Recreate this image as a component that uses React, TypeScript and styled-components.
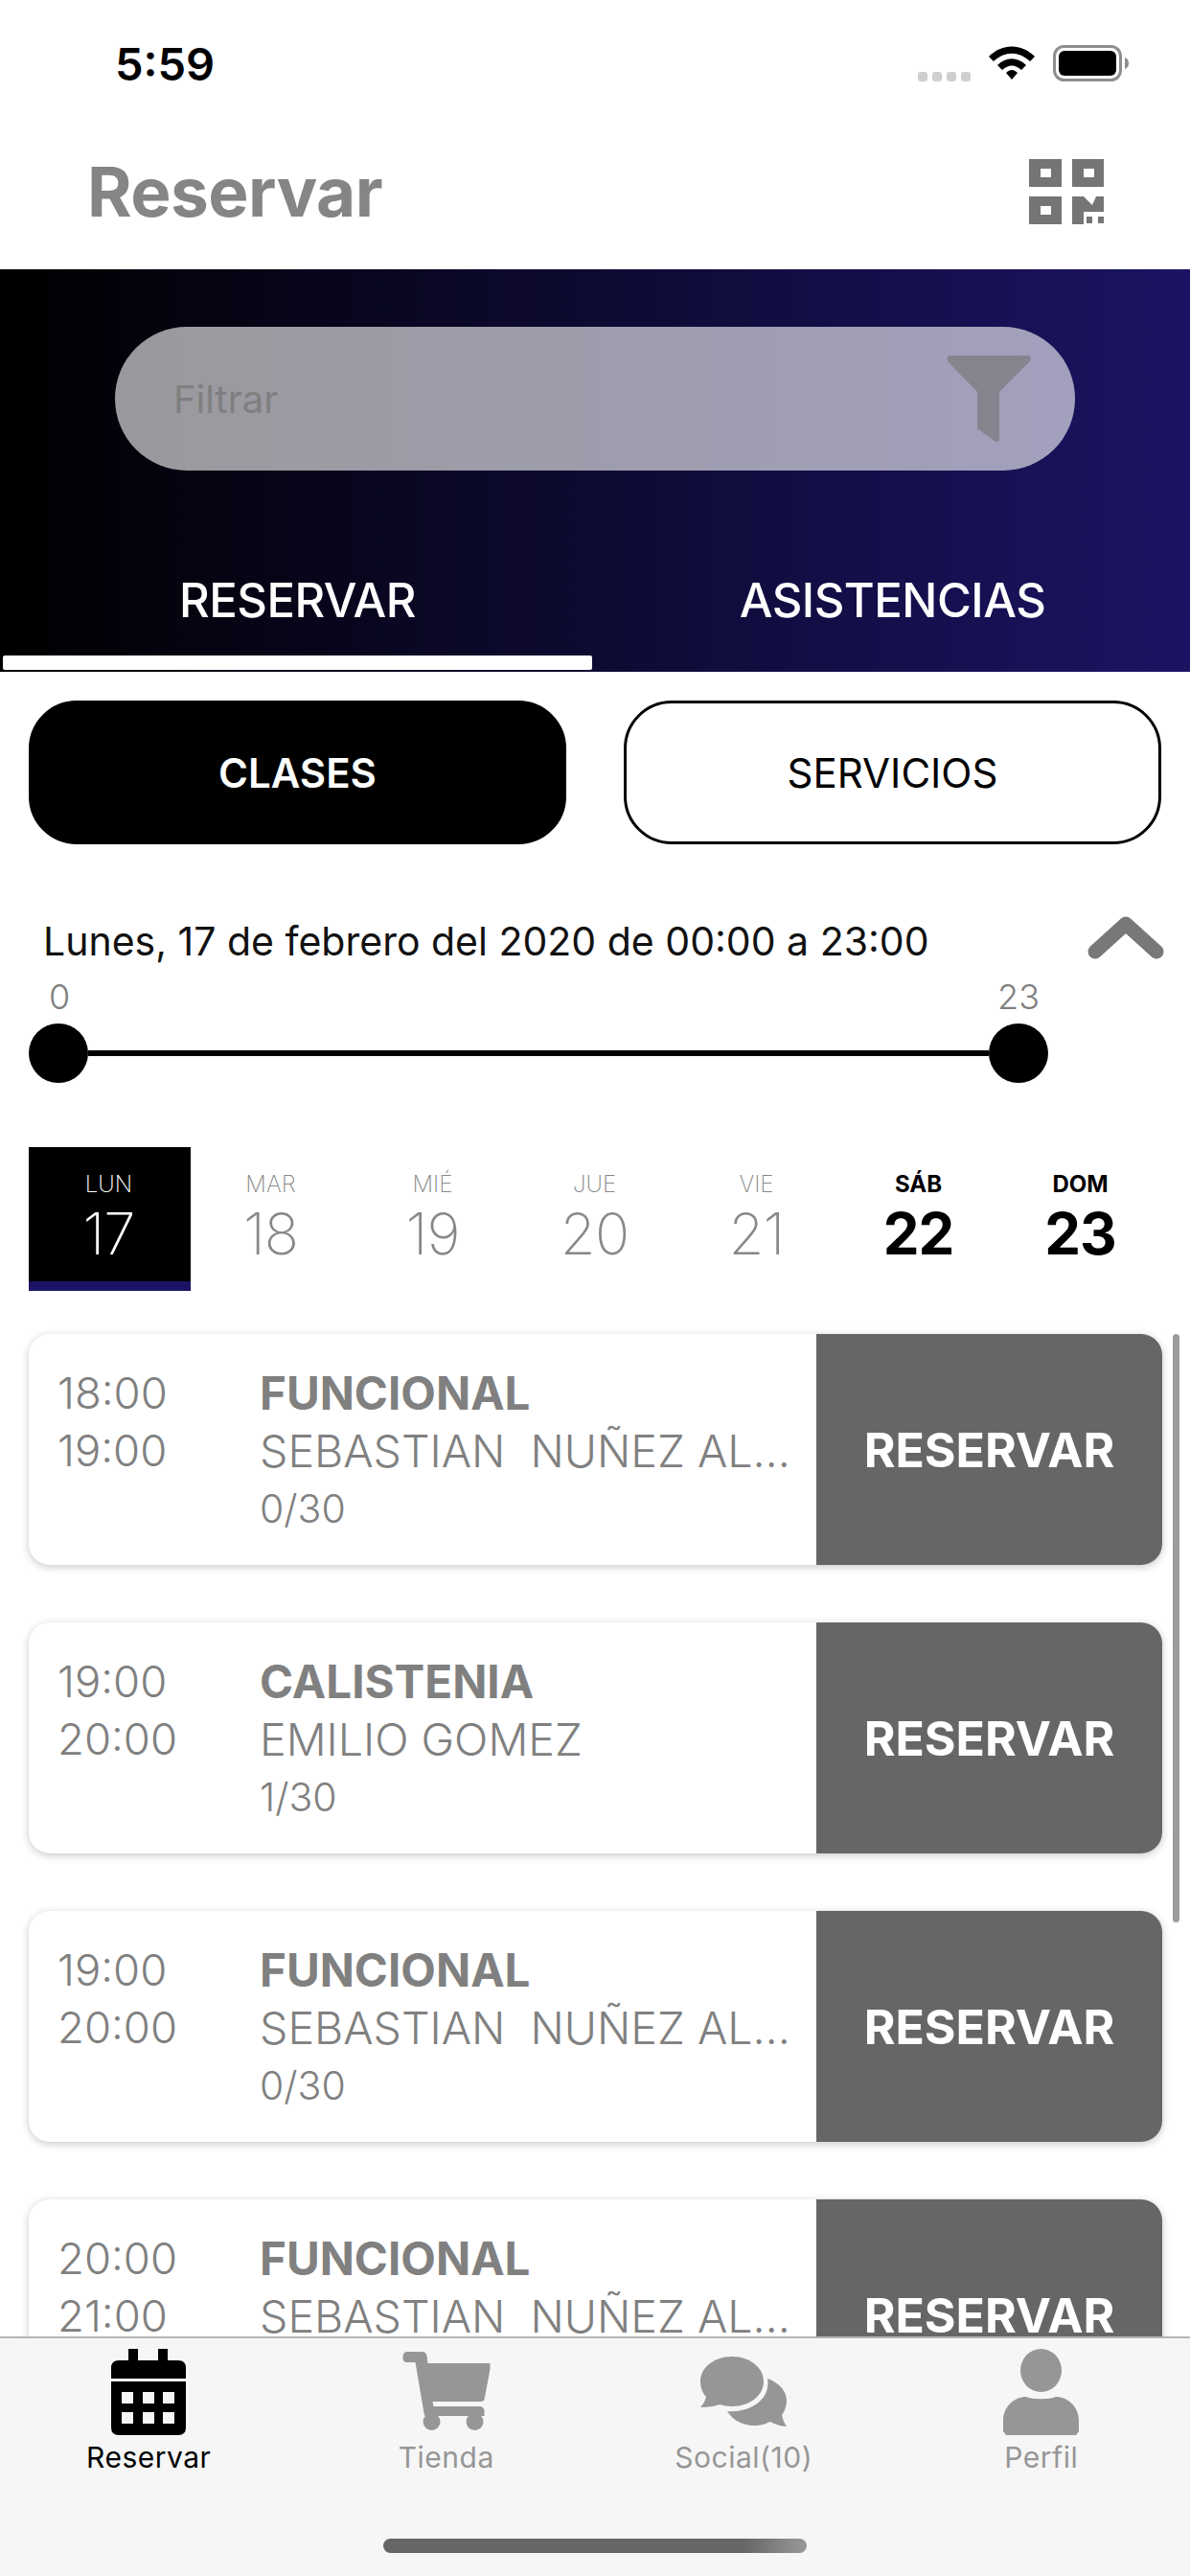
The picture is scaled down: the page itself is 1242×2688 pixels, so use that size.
import React, { useState } from "react";
import styled, { createGlobalStyle } from "styled-components";

const GlobalStyle = createGlobalStyle`
  html, body { margin: 0; padding: 0; background: #fff; }
  * { box-sizing: border-box; }
  body { font-family: Inter, "Liberation Sans", sans-serif; }
`;

const Page = styled.div`
  width: 1242px;
  height: 2688px;
  display: flex;
  flex-direction: column;
  overflow: hidden;
  background: #fff;
`;

const StatusBar = styled.div`
  height: 132px;
  display: flex;
  align-items: center;
  justify-content: space-between;
  padding: 0 63px 0 120px;
  flex: none;
`;

const Clock = styled.span`
  font-size: 47px;
  font-weight: 600;
  color: #000;
`;

const StatusIcons = styled.div`
  display: flex;
  align-items: center;
  gap: 19px;
`;

const SignalDots = styled.div`
  display: flex;
  gap: 5px;
  margin-top: 28px;
`;

const Dot = styled.span`
  width: 10px;
  height: 10px;
  border-radius: 3px;
  background: #cfcfcf;
`;

const Header = styled.header`
  height: 149px;
  flex: none;
  display: flex;
  align-items: center;
  justify-content: space-between;
  padding: 0 90px 14px 91px;
`;

const Title = styled.h1`
  margin: 0;
  font-size: 71px;
  font-weight: 700;
  color: #858585;
  letter-spacing: -0.5px;
`;

const Banner = styled.div`
  height: 420px;
  flex: none;
  display: flex;
  flex-direction: column;
  background: linear-gradient(90deg, #000 0%, #1b1464 100%);
  padding-top: 60px;
`;

const SearchPill = styled.div`
  width: 1002px;
  height: 150px;
  margin-left: 120px;
  border-radius: 75px;
  background: rgba(255, 255, 255, 0.6);
  display: flex;
  align-items: center;
  justify-content: space-between;
  padding: 0 45px 0 61px;
  flex: none;
`;

const Placeholder = styled.span`
  font-size: 40px;
  color: #7f7f80;
`;

const BannerTabs = styled.div`
  display: grid;
  grid-template-columns: 1fr 1fr;
  margin-top: 106px;
`;

const BannerTab = styled.div<{ $active?: boolean }>`
  height: 102px;
  padding: 0 3px;
  text-align: center;
  color: #fff;
  font-size: 49px;
  font-weight: 500;
  letter-spacing: -0.5px;
  line-height: 60px;
  &::after {
    content: "";
    display: ${(p) => (p.$active ? "block" : "none")};
    height: 15px;
    margin-top: 27px;
    background: #fff;
    border-radius: 2px;
  }
`;

const Segments = styled.div`
  display: flex;
  justify-content: space-between;
  padding: 30px 30px 0;
  flex: none;
`;

const Segment = styled.button<{ $active?: boolean }>`
  width: 561px;
  height: 150px;
  border-radius: 50px;
  border: 3px solid #000;
  background: ${(p) => (p.$active ? "#000" : "#fff")};
  color: ${(p) => (p.$active ? "#fff" : "#000")};
  font-family: inherit;
  font-size: 42px;
  font-weight: ${(p) => (p.$active ? 600 : 400)};
`;

const DateRow = styled.div`
  display: flex;
  justify-content: space-between;
  align-items: center;
  padding: 74px 27px 0 45px;
  height: 127px;
  flex: none;
`;

const DateText = styled.span`
  font-size: 41px;
  color: #111;
`;

const ChevronSlot = styled.span`
  display: block;
  margin-top: -8px;
  height: 46px;
`;

const SliderBlock = styled.div`
  width: 1064px;
  margin-left: 30px;
  flex: none;
`;

const SliderLabels = styled.div`
  display: flex;
  justify-content: space-between;
  font-size: 36px;
  font-weight: 300;
  color: #808080;
  padding: 8px 9px 0 21px;
  height: 60px;
  line-height: 48px;
`;

const SliderTrack = styled.div`
  display: flex;
  align-items: center;
  height: 62px;
`;

const Thumb = styled.span`
  width: 62px;
  height: 62px;
  border-radius: 50%;
  background: #000;
  flex: none;
`;

const TrackLine = styled.span`
  flex: 1;
  height: 6px;
  background: #000;
`;

const DayStrip = styled.div`
  display: grid;
  grid-template-columns: repeat(7, 169px);
  padding: 67px 0 0 30px;
  flex: none;
`;

const Day = styled.div<{ $selected?: boolean; $weekend?: boolean }>`
  height: 150px;
  display: flex;
  flex-direction: column;
  align-items: center;
  padding-right: 2px;
  background: ${(p) => (p.$selected ? "#000" : "transparent")};
  border-bottom: 10px solid ${(p) => (p.$selected ? "#1b1464" : "transparent")};
  color: ${(p) => (p.$selected ? "#fff" : p.$weekend ? "#000" : "#888")};
  font-weight: ${(p) => (p.$weekend ? 700 : 200)};
`;

const DayName = styled.span`
  font-size: 24px;
  margin-top: 24px;
  line-height: 30px;
`;

const DayNumber = styled.span`
  font-size: 60px;
  line-height: 72px;
  letter-spacing: -1px;
`;

const ListArea = styled.div`
  flex: 1;
  min-height: 0;
  overflow: hidden;
  position: relative;
  padding: 45px 29px 0 30px;
  display: flex;
  flex-direction: column;
  gap: 60px;
`;

const Scrollbar = styled.span`
  position: absolute;
  top: 45px;
  right: 11px;
  width: 7px;
  height: 614px;
  border-radius: 4px;
  background: #9c9c9c;
`;

const Card = styled.article`
  height: 241px;
  flex: none;
  display: flex;
  border-radius: 22px;
  background: #fff;
  box-shadow: 0 2px 8px rgba(0, 0, 0, 0.22);
  overflow: hidden;
`;

const Times = styled.div`
  width: 241px;
  padding: 32px 0 0 30px;
  font-size: 45.5px;
  font-weight: 300;
  line-height: 60px;
  color: #808080;
  display: flex;
  flex-direction: column;
  flex: none;
`;

const Info = styled.div`
  flex: 1;
  min-width: 0;
  padding-top: 32px;
  line-height: 60px;
  color: #808080;
`;

const ClassName = styled.div`
  font-size: 47.5px;
  font-weight: 700;
`;

const Coach = styled.div`
  font-size: 46.5px;
  font-weight: 300;
  white-space: pre;
`;

const Capacity = styled.div`
  font-weight: 300;
  font-size: 41px;
`;

const BookButton = styled.button`
  width: 361px;
  flex: none;
  border: none;
  background: #666;
  color: #fff;
  font-family: inherit;
  font-size: 50px;
  font-weight: 700;
`;

const TabBar = styled.nav`
  height: 250px;
  flex: none;
  background: #f6f6f6;
  border-top: 2px solid #b5b5b5;
  display: grid;
  grid-template-columns: repeat(4, 1fr);
  padding: 11px 0 0 0;
  position: relative;
`;

const TabItem = styled.div<{ $active?: boolean }>`
  display: flex;
  flex-direction: column;
  align-items: center;
  color: ${(p) => (p.$active ? "#000" : "#969696")};
  font-size: 30px;
  font-weight: 400;
  letter-spacing: 0.5px;
  svg {
    width: 92px;
    height: 90px;
    display: block;
    fill: currentColor;
  }
`;

const TabLabel = styled.span`
  margin-top: 1px;
  line-height: 44px;
`;

const HomeIndicator = styled.span`
  position: absolute;
  left: 400px;
  bottom: 24px;
  width: 442px;
  height: 15px;
  border-radius: 8px;
  background: linear-gradient(90deg, #666 0%, #666 85%, #999 100%);
`;

const days = [
  { name: "LUN", num: 17, selected: true },
  { name: "MAR", num: 18 },
  { name: "MIÉ", num: 19 },
  { name: "JUE", num: 20 },
  { name: "VIE", num: 21 },
  { name: "SÁB", num: 22, weekend: true },
  { name: "DOM", num: 23, weekend: true },
];

const COACH = "SEBASTIAN  NUÑEZ AL…";

const classes = [
  { start: "18:00", end: "19:00", name: "FUNCIONAL", coach: COACH, cap: "0/30" },
  { start: "19:00", end: "20:00", name: "CALISTENIA", coach: "EMILIO GOMEZ", cap: "1/30" },
  { start: "19:00", end: "20:00", name: "FUNCIONAL", coach: COACH, cap: "0/30" },
  { start: "20:00", end: "21:00", name: "FUNCIONAL", coach: COACH, cap: "0/30" },
];

function WifiIcon() {
  return (
    <svg width="48" height="36" viewBox="0 0 48 36" style={{ display: "block" }}>
      <path d="M0 11 C14 -3 34 -3 48 11 L43 16 C31 5 17 5 5 16Z" fill="#000" />
      <path d="M9 20 C18 11 30 11 39 20 L34 25 C27 19 21 19 14 25Z" fill="#000" />
      <path d="M18 28 C22 24 26 24 30 28 L24 35Z" fill="#000" />
    </svg>
  );
}

function BatteryIcon() {
  return (
    <svg width="80" height="38" viewBox="0 0 80 38" style={{ display: "block" }}>
      <rect x="1.5" y="1.5" width="69" height="35" rx="10" fill="none" stroke="#8e8e8e" strokeWidth="3" />
      <rect x="6" y="6" width="60" height="26" rx="6" fill="#000" />
      <path d="M75 13 C78 14 79 16 79 19 C79 22 78 24 75 25Z" fill="#8e8e8e" />
    </svg>
  );
}

function QrIcon() {
  return (
    <svg width="78" height="68" viewBox="0 0 78 68">
      <path fillRule="evenodd" fill="#757575" d="M0 0H34V29H0Z M12 10V19H23V10Z" />
      <path fillRule="evenodd" fill="#757575" d="M45 0H78V29H45Z M57 10V19H68V10Z" />
      <path fillRule="evenodd" fill="#757575" d="M0 39H34V68H0Z M12 49V58H23V49Z" />
      <path fill="#757575" d="M45 39H57L66 48L70 39H78V55H57V68H45Z" />
      <path fill="#757575" d="M60 60H66V67H60Z M72 60H78V67H72Z" />
    </svg>
  );
}

function FunnelIcon() {
  return (
    <svg width="90" height="90" viewBox="0 0 90 90">
      <path d="M3 0H87Q90 2 88 6L56 38V88Q56 90 52 90L33 76V38L2 6Q0 2 3 0Z" fill="#86858f" />
    </svg>
  );
}

function ChevronUp() {
  return (
    <svg width="80" height="46" viewBox="0 0 80 46" style={{ display: "block" }}>
      <path d="M8 38L40 9L72 38" fill="none" stroke="#787878" strokeWidth="15" strokeLinecap="round" strokeLinejoin="round" />
    </svg>
  );
}

function CalendarIcon() {
  return (
    <svg viewBox="-7 0 92 90">
      <path d="M18 0H28V12H49V0H59V12H70Q78 12 78 20V31H0V20Q0 12 8 12H18Z" />
      <path
        fillRule="evenodd"
        d="M0 34H78V82Q78 90 70 90H8Q0 90 0 82Z M11 45V57H23V45Z M33 45V57H45V45Z M54 45V57H66V45Z M11 66V78H23V66Z M33 66V78H45V66Z M54 66V78H66V66Z"
      />
    </svg>
  );
}

function CartIcon() {
  return (
    <svg viewBox="-0.5 -3 92 90">
      <path d="M4 0H20Q24 0 25 4L26 12H91V18L85 50Q84 52 82 52H31L32 57H80Q84 57 85 61V67H24Q22 67 22 64L13 11H4Q0 11 0 6Q0 0 4 0Z" />
      <circle cx="30" cy="73" r="9" />
      <circle cx="75" cy="73" r="9" />
    </svg>
  );
}

function CommentsIcon() {
  return (
    <svg viewBox="-1 -8 92 90">
      <path d="M33 0C51 0 66 11 66 26C66 41 51 52 33 52C28 52 24 51 20 50C15 52 8 53 0 53C3 50 5 46 6 42C2 38 0 32 0 26C0 11 15 0 33 0Z" />
      <path d="M70 23C82 27 90 36 90 46C90 52 88 57 85 61C86 65 87 69 90 73C84 73 77 70 73 68C70 69 65 72 58 72C45 72 34 67 28 57C50 59 74 46 70 23Z" />
    </svg>
  );
}

function PersonIcon() {
  return (
    <svg viewBox="-6 0 92 90">
      <ellipse cx="39.5" cy="22.5" rx="21.5" ry="22.5" />
      <path d="M0 86V75C0 60 12 50 24 50C30 53 49 53 55 50C67 50 79 60 79 75V86L76 90H3Z" />
    </svg>
  );
}

export default function App() {
  const [segment, setSegment] = useState("clases");

  return (
    <Page>
      <GlobalStyle />
      <StatusBar>
        <Clock>5:59</Clock>
        <StatusIcons>
          <SignalDots>
            <Dot />
            <Dot />
            <Dot />
            <Dot />
          </SignalDots>
          <WifiIcon />
          <BatteryIcon />
        </StatusIcons>
      </StatusBar>

      <Header>
        <Title>Reservar</Title>
        <QrIcon />
      </Header>

      <Banner>
        <SearchPill>
          <Placeholder>Filtrar</Placeholder>
          <FunnelIcon />
        </SearchPill>
        <BannerTabs>
          <BannerTab $active>RESERVAR</BannerTab>
          <BannerTab>ASISTENCIAS</BannerTab>
        </BannerTabs>
      </Banner>

      <Segments>
        <Segment $active={segment === "clases"} onClick={() => setSegment("clases")}>
          CLASES
        </Segment>
        <Segment $active={segment === "servicios"} onClick={() => setSegment("servicios")}>
          SERVICIOS
        </Segment>
      </Segments>

      <DateRow>
        <DateText>Lunes, 17 de febrero del 2020 de 00:00 a 23:00</DateText>
        <ChevronSlot>
          <ChevronUp />
        </ChevronSlot>
      </DateRow>

      <SliderBlock>
        <SliderLabels>
          <span>0</span>
          <span>23</span>
        </SliderLabels>
        <SliderTrack>
          <Thumb />
          <TrackLine />
          <Thumb />
        </SliderTrack>
      </SliderBlock>

      <DayStrip>
        {days.map((d) => (
          <Day key={d.name} $selected={d.selected} $weekend={d.weekend}>
            <DayName>{d.name}</DayName>
            <DayNumber>{d.num}</DayNumber>
          </Day>
        ))}
      </DayStrip>

      <ListArea>
        {classes.map((c, i) => (
          <Card key={i}>
            <Times>
              <span>{c.start}</span>
              <span>{c.end}</span>
            </Times>
            <Info>
              <ClassName>{c.name}</ClassName>
              <Coach>{c.coach}</Coach>
              <Capacity>{c.cap}</Capacity>
            </Info>
            <BookButton>RESERVAR</BookButton>
          </Card>
        ))}
        <Scrollbar />
      </ListArea>

      <TabBar>
        <TabItem $active>
          <CalendarIcon />
          <TabLabel>Reservar</TabLabel>
        </TabItem>
        <TabItem>
          <CartIcon />
          <TabLabel>Tienda</TabLabel>
        </TabItem>
        <TabItem>
          <CommentsIcon />
          <TabLabel>Social(10)</TabLabel>
        </TabItem>
        <TabItem>
          <PersonIcon />
          <TabLabel>Perfil</TabLabel>
        </TabItem>
        <HomeIndicator />
      </TabBar>
    </Page>
  );
}
